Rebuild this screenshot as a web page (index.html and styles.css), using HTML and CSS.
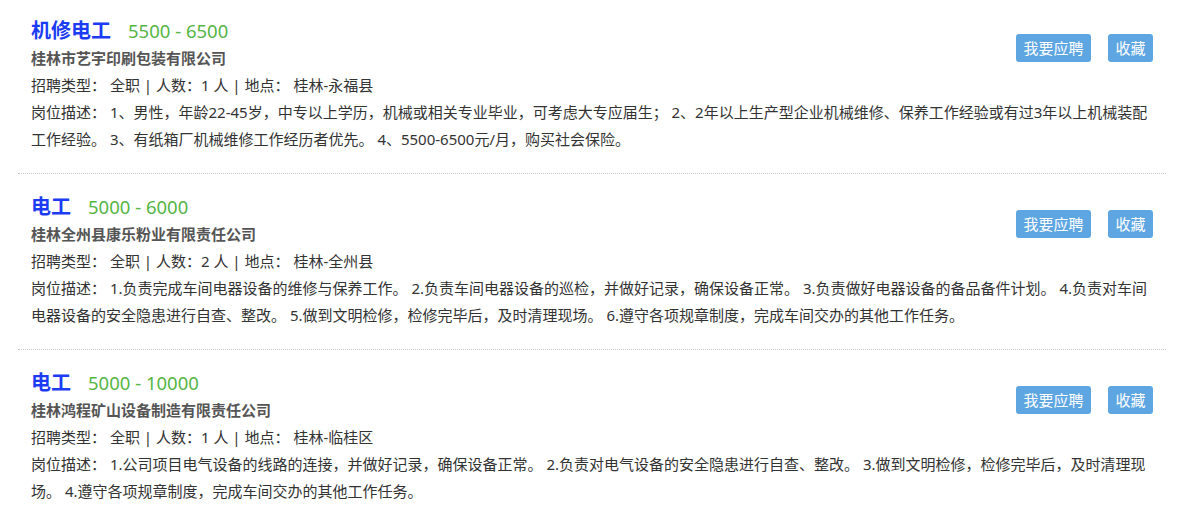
FILE: index.html
```html
<!DOCTYPE html>
<html lang="zh-CN">
<head>
    <meta charset="UTF-8">
    <meta name="viewport" content="width=device-width, initial-scale=1.0">
    <title>招聘信息</title>
    <link rel="stylesheet" href="styles.css">
</head>
<body>

<div class="job-list">
    <div class="job">
        <div class="job-top">
            <div class="job-main">
                <h3 class="job-title"><a href="#">机修电工</a><span class="salary">5500 - 6500</span></h3>
                <div class="company">桂林市艺宇印刷包装有限公司</div>
                <div class="info">招聘类型： 全职 | 人数：1 人 | 地点： 桂林-永福县</div>
            </div>
            <div class="actions">
                <a href="#" class="btn">我要应聘</a>
                <a href="#" class="btn">收藏</a>
            </div>
        </div>
        <p class="desc">岗位描述： 1、男性，年龄22-45岁，中专以上学历，机械或相关专业毕业，可考虑大专应届生； 2、2年以上生产型企业机械维修、保养工作经验或有过3年以上机械装配工作经验。 3、有纸箱厂机械维修工作经历者优先。 4、5500-6500元/月，购买社会保险。</p>
    </div>

    <div class="job">
        <div class="job-top">
            <div class="job-main">
                <h3 class="job-title"><a href="#">电工</a><span class="salary">5000 - 6000</span></h3>
                <div class="company">桂林全州县康乐粉业有限责任公司</div>
                <div class="info">招聘类型： 全职 | 人数：2 人 | 地点： 桂林-全州县</div>
            </div>
            <div class="actions">
                <a href="#" class="btn">我要应聘</a>
                <a href="#" class="btn">收藏</a>
            </div>
        </div>
        <p class="desc">岗位描述： 1.负责完成车间电器设备的维修与保养工作。 2.负责车间电器设备的巡检，并做好记录，确保设备正常。 3.负责做好电器设备的备品备件计划。 4.负责对车间电器设备的安全隐患进行自查、整改。 5.做到文明检修，检修完毕后，及时清理现场。 6.遵守各项规章制度，完成车间交办的其他工作任务。</p>
    </div>

    <div class="job">
        <div class="job-top">
            <div class="job-main">
                <h3 class="job-title"><a href="#">电工</a><span class="salary">5000 - 10000</span></h3>
                <div class="company">桂林鸿程矿山设备制造有限责任公司</div>
                <div class="info">招聘类型： 全职 | 人数：1 人 | 地点： 桂林-临桂区</div>
            </div>
            <div class="actions">
                <a href="#" class="btn">我要应聘</a>
                <a href="#" class="btn">收藏</a>
            </div>
        </div>
        <p class="desc">岗位描述： 1.公司项目电气设备的线路的连接，并做好记录，确保设备正常。 2.负责对电气设备的安全隐患进行自查、整改。 3.做到文明检修，检修完毕后，及时清理现场。 4.遵守各项规章制度，完成车间交办的其他工作任务。</p>
    </div>
</div>

</body>
</html>
```

FILE: styles.css
```css
/* Global styles */
* {
    margin: 0;
    padding: 0;
    box-sizing: border-box;
}

body {
    background: #fff;
    font-family: "Noto Sans", "Noto Sans CJK SC", sans-serif;
    font-size: 15px;
    color: #333;
    text-spacing-trim: space-all;
}

.job-list {
    width: 1148px;
    margin-left: 18px;
}

.job {
    padding: 19px 13px 20px 13px;
    border-bottom: 1px dotted #c8c8c8;
}

.job:first-child {
    padding-top: 17px;
}

.job-top {
    display: flex;
    justify-content: space-between;
    align-items: flex-start;
}

.job-title {
    line-height: 28px;
    font-weight: normal;
}

.job-title a {
    font-size: 20px;
    font-weight: bold;
    color: #1b3cf2;
    text-decoration: none;
}

.salary {
    font-size: 18.5px;
    color: #55b545;
    margin-left: 17px;
}

.company {
    line-height: 27px;
    font-weight: bold;
    color: #555;
}

.info {
    line-height: 27px;
}

.actions {
    display: flex;
    gap: 17px;
    margin-top: 17px;
}

.btn {
    display: block;
    height: 28px;
    line-height: 28px;
    padding: 0 7.5px;
    border-radius: 3px;
    background: #5ea6e2;
    color: #fff;
    text-decoration: none;
}

.desc {
    line-height: 27px;
}
```
